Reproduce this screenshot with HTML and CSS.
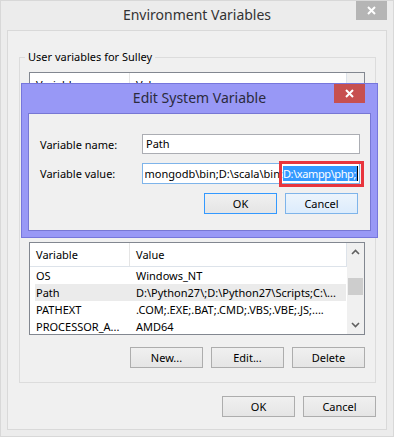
FILE: index.html
```html
<!DOCTYPE html>
<html>
<head>
<meta charset="utf-8">
<link rel="stylesheet" href="styles.css">
</head>
<body>
<div class="window">
  <div class="titlebar">
    <span></span>
    <span class="title">Environment Variables</span>
    <span class="close close-gray"><svg width="11" height="9" viewBox="0 0 11 9"><path d="M2 1 L9 8 M9 1 L2 8" stroke="#fff" stroke-width="2"/></svg></span>
  </div>
  <div class="panel">
    <div class="group">
      <div class="group-title">User variables for Sulley</div>
      <div class="list list-user">
        <div class="list-body">
          <div class="list-head"><span class="h1">Variable</span><span class="h2">Value</span><span class="hfill"></span></div>
        </div>
        <div class="scrollbar"></div>
      </div>
      <div class="list list-sys">
        <div class="list-body">
          <div class="list-head"><span class="h1">Variable</span><span class="h2">Value</span><span class="hfill"></span></div>
          <div class="row"><span class="c1">OS</span><span class="c2">Windows_NT</span></div>
          <div class="row row-sel"><span class="c1">Path</span><span class="c2">D:\Python27\;D:\Python27\Scripts;C:\...</span></div>
          <div class="row"><span class="c1">PATHEXT</span><span class="c2">.COM;.EXE;.BAT;.CMD;.VBS;.VBE;.JS;....</span></div>
          <div class="row"><span class="c1">PROCESSOR_A...</span><span class="c2">AMD64</span></div>
        </div>
        <div class="scrollbar">
          <span class="arrow"><svg width="9" height="6" viewBox="0 0 9 6"><path d="M1 5 L4.5 1.5 L8 5" fill="none" stroke="#606060" stroke-width="1.6"/></svg></span>
          <span class="thumb"></span>
          <span class="arrow arrow-down"><svg width="9" height="6" viewBox="0 0 9 6"><path d="M1 1 L4.5 4.5 L8 1" fill="none" stroke="#606060" stroke-width="1.6"/></svg></span>
        </div>
      </div>
      <div class="btn-row group-btns">
        <button class="btn">New...</button>
        <button class="btn">Edit...</button>
        <button class="btn">Delete</button>
      </div>
    </div>
    <div class="btn-row main-btns">
      <button class="btn">OK</button>
      <button class="btn">Cancel</button>
    </div>
  </div>

  <div class="dialog">
    <div class="titlebar dlg-titlebar">
      <span></span>
      <span class="title">Edit System Variable</span>
      <span class="close close-red"><svg width="11" height="9" viewBox="0 0 11 9"><path d="M2 1 L9 8 M9 1 L2 8" stroke="#fff" stroke-width="2"/></svg></span>
    </div>
    <div class="dlg-panel">
      <div class="field">
        <span class="label">Variable name:</span>
        <div class="input">Path</div>
      </div>
      <div class="field">
        <span class="label">Variable value:</span>
        <div class="input input-focus">
          <div class="scroll-text"><span>:\mongodb\bin;D:\scala\bin;</span><span class="sel">D:\xampp\php;</span><span class="caret"></span></div>
          <span class="mark"></span>
        </div>
      </div>
      <div class="btn-row dlg-btns">
        <button class="btn btn-default">OK</button>
        <button class="btn btn-hover">Cancel</button>
      </div>
    </div>
  </div>
</div>
</body>
</html>
```
FILE: styles.css
```css
* { box-sizing: border-box; }
html, body { margin: 0; padding: 0; }
body {
  width: 394px;
  height: 437px;
  overflow: hidden;
  background: #ececec;
  font-family: "Noto Sans", "Segoe UI", sans-serif;
  font-size: 11px;
  color: #000;
}
.window {
  position: relative;
  width: 394px;
  height: 437px;
  border: 1px solid #d8d8d8;
  background: #ececec;
}
.titlebar {
  display: grid;
  grid-template-columns: 1fr auto 1fr;
  height: 29px;
}
.title {
  font-size: 14px;
  line-height: 28px;
  color: #333;
  white-space: nowrap;
}
.close {
  justify-self: end;
  width: 31px;
  height: 19px;
  margin-right: 6px;
  display: flex;
  align-items: center;
  justify-content: center;
}
.close-gray { background: #b5b5b5; }
.close-red { background: #c75050; }

.panel {
  margin: 0 6px;
  height: 400px;
  border: 1px solid #d9d9d9;
  background: #f0f0f0;
  padding: 0 10px 0 11px;
  display: flex;
  flex-direction: column;
}
.group {
  margin-top: 26px;
  border: 1px solid #dcdcdc;
  padding: 0 9px 14px 9px;
}
.group-title {
  width: max-content;
  margin: -9px 0 0 -4px;
  padding: 0 3px;
  height: 16px;
  line-height: 16px;
  background: #f0f0f0;
}
.list {
  width: 336px;
  border: 1px solid #828790;
  background: #fff;
  display: flex;
  overflow: hidden;
}
.list-user { margin-top: 7px; height: 150px; }
.list-sys { margin-top: 20px; height: 93px; }
.list-body { flex: 1; min-width: 0; }
.list-head {
  display: flex;
  height: 24px;
  border-bottom: 1px solid #dde3ea;
  line-height: 24px;
}
.h1 {
  width: 100px;
  padding-left: 6px;
  border-right: 1px solid #e5e5e5;
}
.h2 {
  width: 216px;
  padding-left: 6px;
}
.hfill {
  flex: 1;
  border-left: 1px solid #dde3ea;
}
.row {
  display: flex;
  height: 17px;
  line-height: 17px;
  margin: 0 1px 0 5px;
  white-space: nowrap;
}
.row-sel { background: #ebebeb; }
.c1 { width: 101px; padding-left: 1px; }
.c2 { flex: 1; }
.scrollbar {
  width: 17px;
  background: #f0f0f0;
  display: flex;
  flex-direction: column;
  align-items: center;
}
.arrow {
  height: 17px;
  display: flex;
  align-items: center;
  justify-content: center;
}
.thumb {
  margin-top: 18px;
  width: 15px;
  height: 17px;
  background: #cdcdcd;
}
.arrow-down { margin-top: auto; margin-bottom: 1px; }

.btn-row {
  display: flex;
  justify-content: flex-end;
  gap: 8px;
}
.group-btns { margin-top: 12px; padding-right: 1px; }
.main-btns { margin-top: 13px; }
.btn {
  width: 73px;
  height: 21px;
  border: 1px solid #adadad;
  background: linear-gradient(#f0f0f0, #e5e5e5);
  font-family: inherit;
  font-size: 11px;
  color: #000;
  padding: 0;
  line-height: 18px;
}

.dialog {
  position: absolute;
  left: 20px;
  top: 82px;
  width: 357px;
  height: 155px;
  background: #9898f6;
  border: 1px solid #7676dc;
  padding: 0 6px 6px 6px;
  display: flex;
  flex-direction: column;
}
.dlg-titlebar { height: 29px; }
.dlg-titlebar .title { color: #2b2b3d; }
.dlg-panel {
  flex: 1;
  background: #f0f0f0;
  border: 1px solid #7777d4;
  padding: 20px 10px 0 11px;
}
.field {
  display: flex;
  align-items: center;
  margin-bottom: 9px;
}
.label {
  width: 102px;
}
.input {
  position: relative;
  width: 218px;
  height: 20px;
  border: 1px solid #abadb3;
  background: #fff;
  padding: 0 3px;
  line-height: 18px;
  white-space: nowrap;
}
.input-focus {
  height: 21px;
  border-color: #7eb4ea;
  padding: 0 1px 0 2px;
}
.scroll-text {
  display: flex;
  justify-content: flex-end;
  overflow: hidden;
  height: 19px;
  align-items: center;
}
.scroll-text span { flex-shrink: 0; }
.sel {
  background: #3399ff;
  color: #fff;
  line-height: 15px;
  height: 15px;
  letter-spacing: -0.4px;
  padding-right: 1px;
}
.caret {
  width: 1px;
  height: 15px;
  background: #000;
}
.mark {
  position: absolute;
  left: 136px;
  top: -3px;
  width: 85px;
  height: 26px;
  border: 3px solid #e8353d;
}
.dlg-btns {
  margin-top: 3px;
  padding-right: 2px;
}
.btn-default { border-color: #3399ff; }
.btn-hover {
  border-color: #7eb4ea;
  background: linear-gradient(#ecf4fc, #dcecfc);
}
```
